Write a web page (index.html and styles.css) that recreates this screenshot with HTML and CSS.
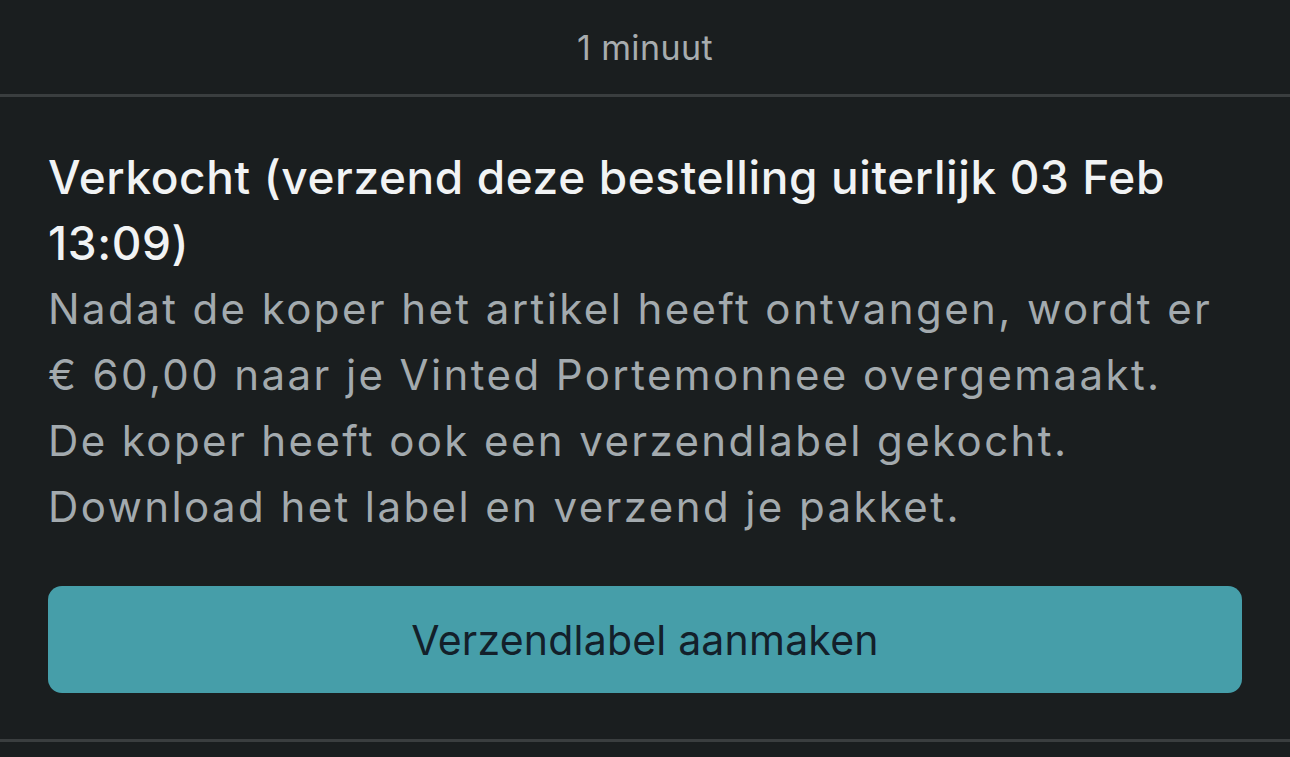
FILE: index.html
```html
<!DOCTYPE html>
<html lang="nl">
<head>
<meta charset="utf-8">
<title>Bericht</title>
<link rel="stylesheet" href="styles.css">
</head>
<body>
<div class="screen">
  <header class="time-row"><span class="time">1 minuut</span></header>
  <section class="card">
    <h2 class="title">Verkocht (verzend deze bestelling uiterlijk 03 Feb 13:09)</h2>
    <p class="body">Nadat de koper het artikel heeft ontvangen, wordt er €&nbsp;60,00 naar je Vinted Portemonnee overgemaakt. De koper heeft ook een verzendlabel gekocht. Download het label en verzend je pakket.</p>
    <button class="action">Verzendlabel aanmaken</button>
  </section>
</div>
</body>
</html>
```

FILE: styles.css
```css
html, body {
  margin: 0;
  padding: 0;
  background: #1a1e1f;
}
body {
  font-family: Inter, "Noto Sans", sans-serif;
  width: 1290px;
  height: 757px;
  overflow: hidden;
}
.screen {
  display: flex;
  flex-direction: column;
}
.time-row {
  height: 94px;
  display: flex;
  align-items: center;
  justify-content: center;
  border-bottom: 3px solid #3a3e3f;
}
.time {
  color: #a7acae;
  font-size: 34px;
  letter-spacing: 0.4px;
}
.card {
  padding: 47px 48px 46px;
  border-bottom: 3px solid #3a3e3f;
  display: flex;
  flex-direction: column;
}
.title {
  margin: 0;
  color: #f1f3f4;
  font-size: 46px;
  font-weight: 500;
  line-height: 66px;
  letter-spacing: 0.6px;
  padding-right: 60px;
}
.body {
  margin: 0;
  padding-right: 20px;
  color: #a3aaae;
  font-size: 42px;
  line-height: 66px;
  letter-spacing: 2.4px;
}
.action {
  margin-top: 46px;
  height: 107px;
  border: none;
  border-radius: 14px;
  background: #469ea9;
  color: #13202a;
  font-family: inherit;
  font-size: 41px;
  letter-spacing: 0.2px;
  padding: 0;
}
```
